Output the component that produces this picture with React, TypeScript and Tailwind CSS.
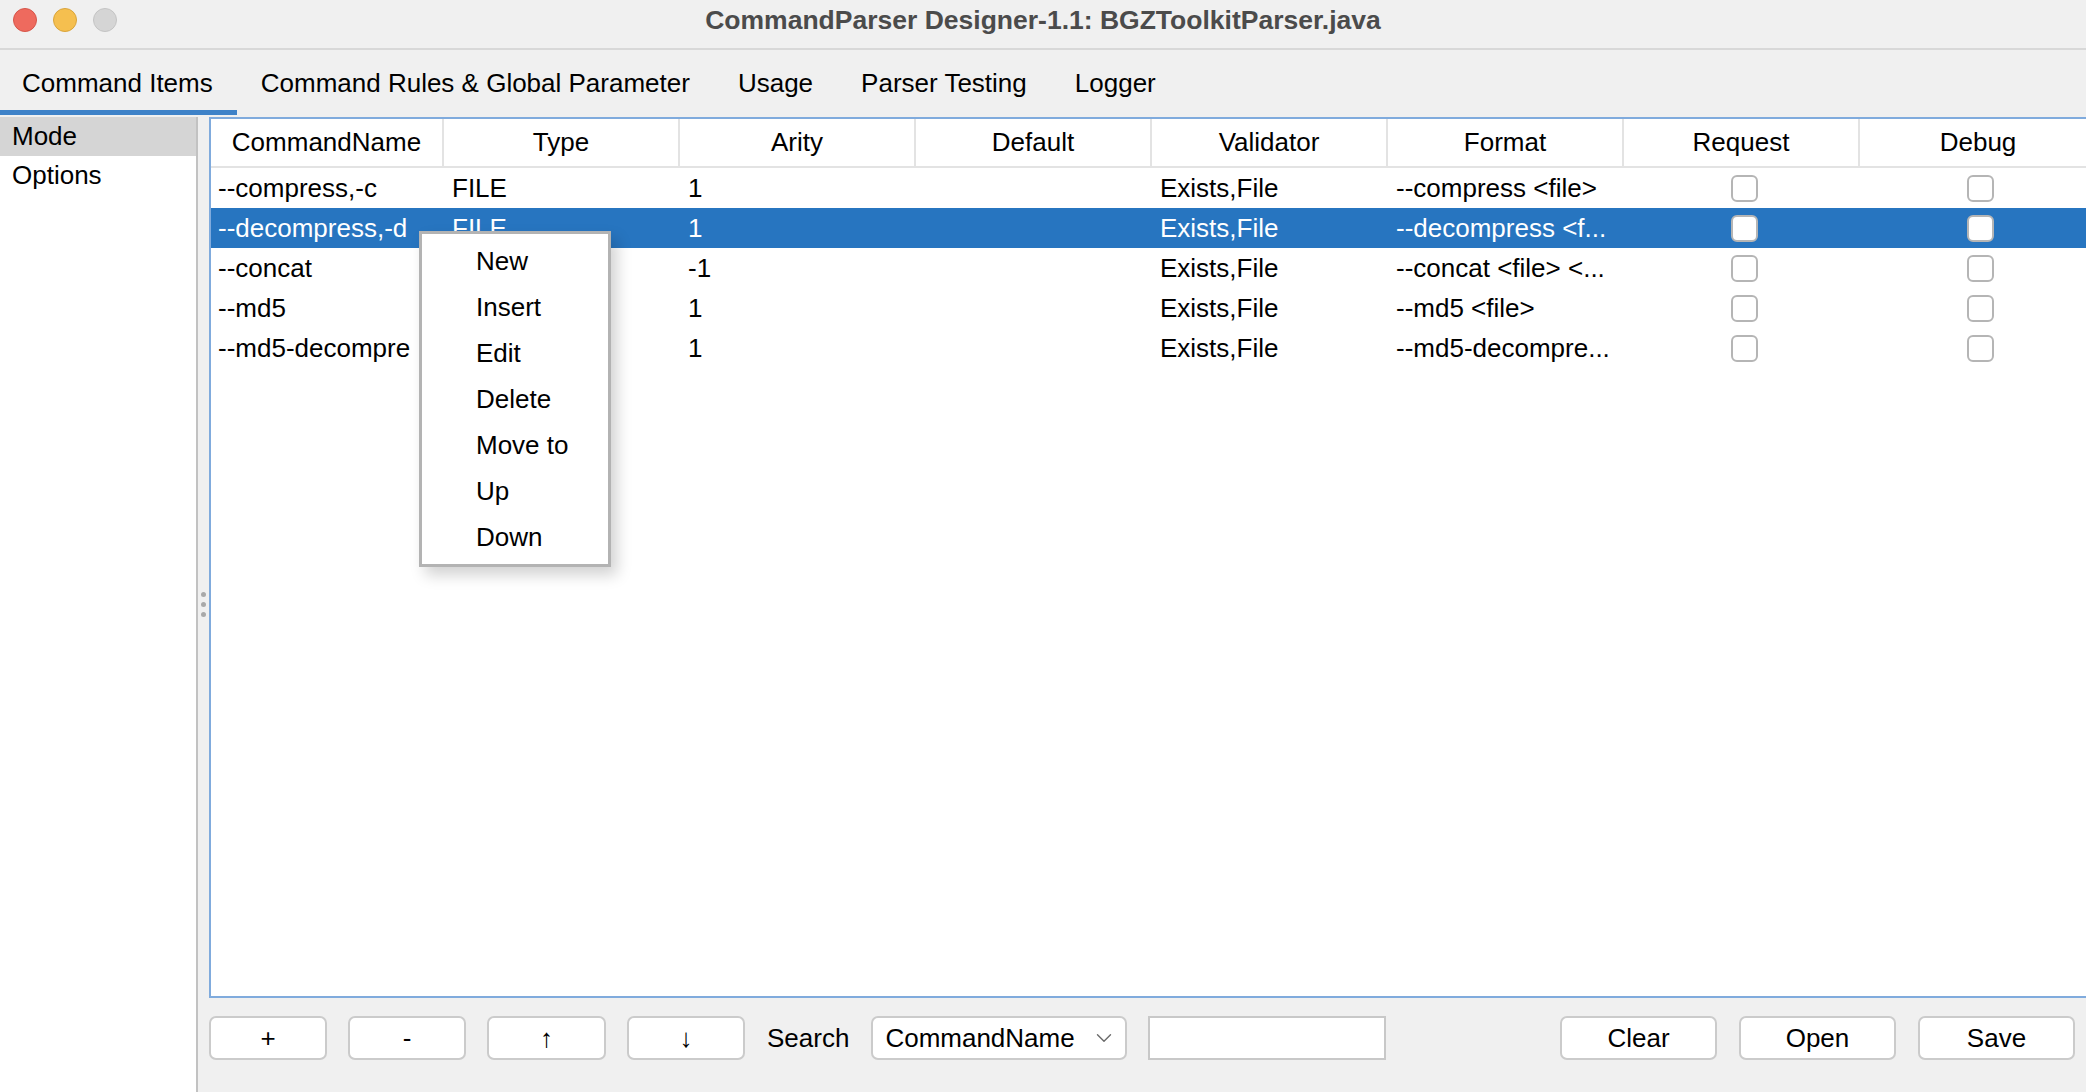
import { ChevronDown } from "lucide-react";

const columns = [
  { title: "CommandName", width: "w-[233px]" },
  { title: "Type", width: "w-[236px]" },
  { title: "Arity", width: "w-[236px]" },
  { title: "Default", width: "w-[236px]" },
  { title: "Validator", width: "w-[236px]" },
  { title: "Format", width: "w-[236px]" },
  { title: "Request", width: "w-[236px]" },
  { title: "Debug", width: "w-[236px]" },
];

// type of rows 3-5 sits under the popup menu, so it is left out
const rows = [
  { name: "--compress,-c", type: "FILE", arity: "1", validator: "Exists,File", format: "--compress <file>" },
  { name: "--decompress,-d", type: "FILE", arity: "1", validator: "Exists,File", format: "--decompress <f...", selected: true },
  { name: "--concat", type: "", arity: "-1", validator: "Exists,File", format: "--concat <file> <..." },
  { name: "--md5", type: "", arity: "1", validator: "Exists,File", format: "--md5 <file>" },
  { name: "--md5-decompre", type: "", arity: "1", validator: "Exists,File", format: "--md5-decompre..." },
];

const menuItems = ["New", "Insert", "Edit", "Delete", "Move to", "Up", "Down"];

const tabs = ["Command Items", "Command Rules & Global Parameter", "Usage", "Parser Testing", "Logger"];

const Checkbox = () => (
  <div className="w-[27px] h-[27px] rounded-[6px] border-2 border-[#b5b5b5] bg-white" />
);

const Button = ({ label, width }: { label: string; width: string }) => (
  <div
    className={`${width} h-[44px] flex items-center justify-center bg-white border-2 border-[#cbcbcb] rounded-[7px] text-black`}
  >
    {label}
  </div>
);

const App = () => {
  return (
    <div className="relative w-[2086px] h-[1092px] bg-[#f0f0f0] flex flex-col overflow-hidden font-['Liberation_Sans',Arial,sans-serif] text-[26px] text-black">
      {/* title bar */}
      <div className="h-[50px] flex flex-row items-center pb-[8px] border-b-2 border-[#d8d8d8]">
        <div className="w-[140px] flex flex-row items-center gap-[16px] pl-[13px]">
          <span className="w-[24px] h-[24px] rounded-full bg-[#ee6a5e] border border-[#d65549]" />
          <span className="w-[24px] h-[24px] rounded-full bg-[#f5bf4f] border border-[#d9a43b]" />
          <span className="w-[24px] h-[24px] rounded-full bg-[#d5d5d5] border border-[#c4c4c4]" />
        </div>
        <div className="flex-1 text-center font-bold text-[26.5px] text-[#4b4b4b] leading-none">
          CommandParser Designer-1.1: BGZToolkitParser.java
        </div>
        <div className="w-[140px]" />
      </div>

      {/* tab bar */}
      <div className="h-[65px] flex flex-row">
        {tabs.map((tab, i) => (
          <div
            key={tab}
            className={`h-full flex items-center pt-[6px] border-b-[5px] ${
              i === 0 ? "pl-[22px] pr-[24px] border-[#3e82c8]" : "px-[24px] border-transparent"
            }`}
          >
            {tab}
          </div>
        ))}
      </div>

      {/* body */}
      <div className="flex-1 flex flex-row pt-[2px] min-h-0">
        <div className="w-[198px] bg-white border-r-2 border-[#c2c2c2] flex flex-col">
          <div className="h-[39px] flex items-center pl-[12px] bg-[#d5d5d5]">Mode</div>
          <div className="h-[39px] flex items-center pl-[12px]">Options</div>
        </div>

        <div className="w-[11px] flex flex-col items-center justify-center gap-[5px]">
          <span className="w-[5px] h-[5px] rounded-full bg-[#a9a9a9]" />
          <span className="w-[5px] h-[5px] rounded-full bg-[#a9a9a9]" />
          <span className="w-[5px] h-[5px] rounded-full bg-[#a9a9a9]" />
        </div>

        <div className="flex-1 flex flex-col min-w-0">
          {/* table */}
          <div className="flex-1 bg-white border-y-2 border-l-2 border-[#80abdd] overflow-hidden">
            <div className="flex flex-row h-[49px] border-b-2 border-[#e3e3e3] w-max">
              {columns.map((col, i) => (
                <div
                  key={col.title}
                  className={`${col.width} shrink-0 flex items-center justify-center ${
                    i < columns.length - 1 ? "border-r-2 border-[#e3e3e3]" : ""
                  }`}
                >
                  {col.title}
                </div>
              ))}
            </div>
            {rows.map((row) => (
              <div
                key={row.name}
                className={`flex flex-row h-[40px] items-center w-max ${
                  row.selected ? "bg-[#2775c0] text-white" : ""
                }`}
              >
                <div className="w-[233px] shrink-0 px-[7px] overflow-hidden whitespace-nowrap">{row.name}</div>
                <div className="w-[236px] shrink-0 px-[8px] overflow-hidden whitespace-nowrap">{row.type}</div>
                <div className="w-[236px] shrink-0 px-[8px] overflow-hidden whitespace-nowrap">{row.arity}</div>
                <div className="w-[236px] shrink-0 px-[8px]" />
                <div className="w-[236px] shrink-0 px-[8px] overflow-hidden whitespace-nowrap">{row.validator}</div>
                <div className="w-[236px] shrink-0 px-[8px] overflow-hidden whitespace-nowrap">{row.format}</div>
                <div className="w-[236px] shrink-0 flex justify-center pl-[4px]">
                  <Checkbox />
                </div>
                <div className="w-[236px] shrink-0 flex justify-center pl-[4px]">
                  <Checkbox />
                </div>
              </div>
            ))}
          </div>

          {/* bottom buttons */}
          <div className="h-[94px] flex flex-row items-start pt-[18px] pr-[11px]">
            <div className="flex flex-row items-center gap-[21px]">
              <Button label="+" width="w-[118px]" />
              <Button label="-" width="w-[118px]" />
              <Button label="↑" width="w-[119px]" />
              <Button label="↓" width="w-[118px]" />
              <span className="px-[1px]">Search</span>
              <div className="w-[256px] h-[44px] flex flex-row items-center justify-between pl-[12px] pr-[8px] bg-white border-2 border-[#cbcbcb] rounded-[7px]">
                <span>CommandName</span>
                <ChevronDown size={26} strokeWidth={1.3} className="text-[#6a6a6a]" />
              </div>
              <div className="w-[238px] h-[44px] bg-white border-2 border-[#c8c8c8]" />
            </div>
            <div className="flex-1" />
            <div className="flex flex-row gap-[22px]">
              <Button label="Clear" width="w-[157px]" />
              <Button label="Open" width="w-[157px]" />
              <Button label="Save" width="w-[157px]" />
            </div>
          </div>
        </div>
      </div>

      {/* context menu */}
      <div className="absolute left-[419px] top-[231px] w-[192px] bg-white border-[3px] border-[#b3b3b3] py-[4px] shadow-[6px_8px_14px_rgba(0,0,0,0.18)]">
        {menuItems.map((item) => (
          <div key={item} className="h-[46px] flex items-center pl-[54px]">
            {item}
          </div>
        ))}
      </div>
    </div>
  );
};

export default App;
